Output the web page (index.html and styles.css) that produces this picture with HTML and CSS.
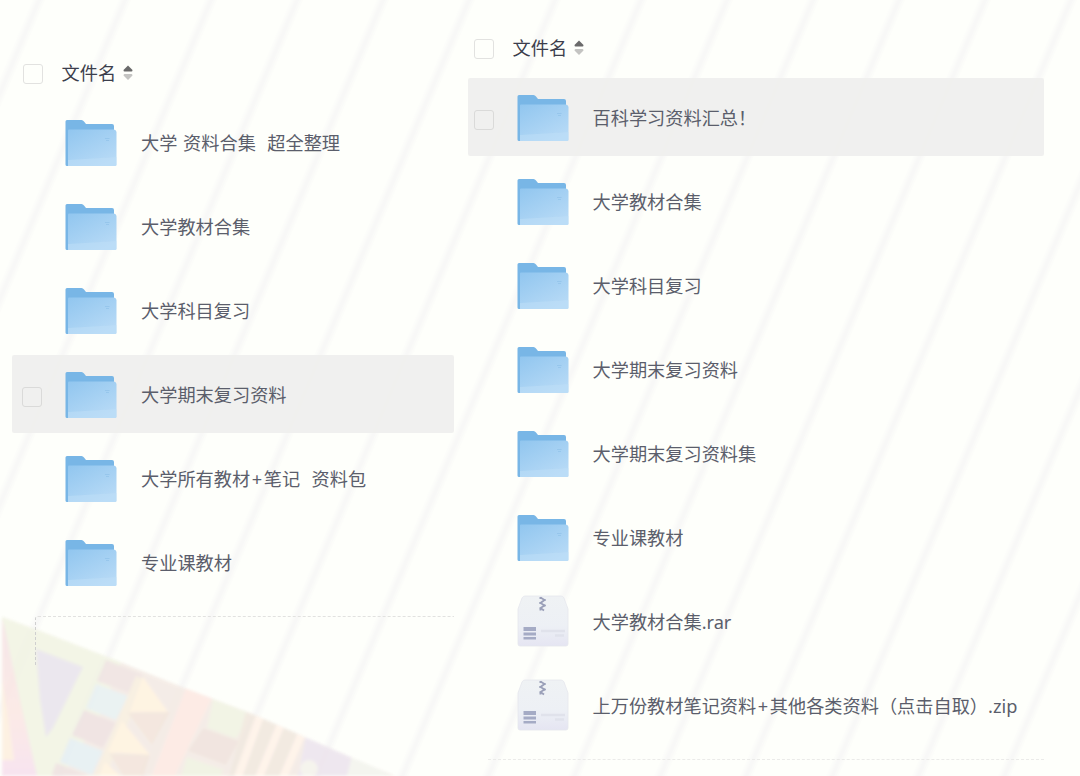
FILE: index.html
```
<!DOCTYPE html>
<html lang="zh-CN">
<head>
  <meta charset="UTF-8" />
  <meta name="viewport" content="width=device-width, initial-scale=1.0"/>
  <title>文件列表</title>
  <link rel="stylesheet" href="styles.css">
</head>
<body>

<!-- page backdrop: slanted stripes + patchwork corner -->
<svg class="backdrop" width="1080" height="776" viewBox="0 0 1080 776" aria-hidden="true">
  <defs>
    <linearGradient id="stripeFade">
      <stop offset="0" stop-color="#f8f8f7" stop-opacity="0"/>
      <stop offset=".45" stop-color="#f8f8f7"/>
      <stop offset=".55" stop-color="#f8f8f7"/>
      <stop offset="1" stop-color="#f8f8f7" stop-opacity="0"/>
    </linearGradient>
    <pattern id="stripes" width="86" height="800" patternUnits="userSpaceOnUse" patternTransform="skewX(-22.7)">
      <rect x="32" width="14" height="800" fill="url(#stripeFade)"/>
    </pattern>
    <linearGradient id="pinkEdge" x1="0" y1="0" x2="0" y2="1">
      <stop offset="0" stop-color="#f5e3e6"/>
      <stop offset=".6" stop-color="#fbe8e4"/>
      <stop offset="1" stop-color="#f7e1ef"/>
    </linearGradient>
    <clipPath id="corner">
      <path d="M2 617L40 631L115 660L187 689L250 713L300 735L350 757L395 776H2z"/>
    </clipPath>
    <filter id="soften"><feGaussianBlur stdDeviation="1.5"/></filter>
  </defs>
  <rect width="1080" height="776" fill="url(#stripes)"/>
  <g filter="url(#soften)" opacity=".9">
    <g clip-path="url(#corner)">
      <path fill="#f4ebe5" d="M0 610H400V780H0z"/>
      <path fill="#f2f4e4" d="M0 610L122 660L98 720L60 780H0z"/>
      <path fill="url(#pinkEdge)" d="M0 612L4 625L20 700L38 780H0z"/>
      <path fill="#fdf0e0" d="M0 670L8 715L14 760H0z"/>
      <path fill="#eae5ed" d="M36 649L83 667L53 728L46 737L40 700z"/>
      <path fill="#f0e4e2" d="M106 660L143 675L129 693L97 681z"/>
      <path fill="#e8f1f2" d="M96 684L128 696L116 720L86 708z"/>
      <path fill="#efe2e1" d="M84 710L116 723L103 748L72 735z"/>
      <path fill="#e6f0f3" d="M70 738L103 751L92 775L60 762z"/>
      <path fill="#efe3e1" d="M56 763L94 778L50 780z"/>
      <path fill="#f8efe0" d="M136 676L146 680L104 780H92z"/>
      <path fill="#fff3e0" d="M143 677L168 712H130z"/>
      <path fill="#fff3e0" d="M122 721L150 755L108 752z"/>
      <path fill="#fff3e0" d="M105 762L125 780H98z"/>
      <path fill="#f3e5dc" d="M128 713L170 712L152 745z"/>
      <path fill="#f3e5dc" d="M110 754L150 755L142 780H126z"/>
      <path fill="#fde9e3" d="M186 688L212 698L173 780H150z"/>
      <path fill="#f1f3e3" d="M213 699L252 714L236 739L207 728z"/>
      <path fill="#f0e3de" d="M203 728L239 741L226 765L188 751z"/>
      <path fill="#f0f2e2" d="M187 757L224 770L217 780H180z"/>
      <path fill="#f1e8df" d="M246 712L304 733L286 780H228z"/>
      <path fill="none" stroke="#fff3e9" stroke-width="8" d="M260 716L237 780M281 724L258 780M302 733L282 780"/>
      <path fill="#ede5ee" d="M306 735L352 756L346 780H297z"/>
      <path fill="#f3f4ee" d="M352 756L400 780H346z"/>
      <circle cx="309" cy="769" r="9" fill="#f5f3ec"/>
    </g>
  </g>
</svg>

<!-- icon symbols -->
<svg class="symbols" width="0" height="0" aria-hidden="true">
  <defs>
    <linearGradient id="folderFront" x1="0" y1="0" x2=".7" y2="1">
      <stop offset="0" stop-color="#91c6ef"/>
      <stop offset="1" stop-color="#b7daf6"/>
    </linearGradient>
    <linearGradient id="boxFill" x1="0" y1="0" x2="0" y2="1">
      <stop offset="0" stop-color="#eff2f4"/>
      <stop offset=".6" stop-color="#edf0f5"/>
      <stop offset="1" stop-color="#e5e5f2"/>
    </linearGradient>
    <symbol id="folder" viewBox="0 0 52 48">
      <path fill="#78b6e6" d="M2 1H16.500Q18 1 19 2.500L21 5H47Q49 5 49 7V14H3V47H2Q.500 47 .500 45.500V2.500Q.500 1 2 1z"/>
      <path fill="url(#folderFront)" d="M4 10.500H49Q51.500 11 51.500 13V45.500Q51.500 47 50 47H3V11.500Q3 10.500 4 10.500z"/>
      <path fill="#bfdff8" opacity=".5" d="M3 41L51.500 38V45.500Q51.500 47 50 47H3z"/>
      <path stroke="#7fb6e2" stroke-width=".8" opacity=".5" d="M40 19.500H44.500M41 21.500H44"/>
    </symbol>
    <symbol id="archive" viewBox="0 0 52 52">
      <path fill="url(#boxFill)" stroke="#e6e7ee" stroke-width=".8" d="M8 1H44Q46 1 47 3L51 14V49Q51 51 49 51H3Q1 51 1 49V14L5 3Q6 1 8 1z"/>
      <path fill="none" stroke="#9a9fb8" stroke-width="1.800" d="M23.500 2.500L27.500 5L23.500 8L27.500 10.500L23.500 13L27 15.500"/>
      <path fill="#9a9fb8" d="M22.500 2H24.500V4H22.500zM26.500 4H28.500V6H26.500zM22.500 7H24.500V9H22.500zM26.500 9.500H28.500V11.500H26.500zM22.500 13.500H24.500V15.500H22.500z"/>
      <path fill="#a5abc5" d="M6.500 32H19V36H6.500zM6.500 37.500H19V40.500H6.500zM6.500 42H19V44.500H6.500z"/>
      <path stroke="#e0e2eb" stroke-width="2.500" d="M24 36H48M38 40.500H47"/>
    </symbol>
    <symbol id="sort" viewBox="0 0 10 16">
      <path fill="#6a6a6a" d="M5 .500L9.500 5Q9.500 6.500 8.500 6.500H1.500Q.500 6.500 .500 5z"/>
      <path fill="#c4c4c2" d="M5 15L9.500 10.500Q9.500 9 8.500 9H1.500Q.500 9 .500 10.500z"/>
    </symbol>
  </defs>
</svg>

<main class="lists">
  <section class="panel panel-left">
    <div class="list-head">
      <span class="check"></span>
      <span>文件名</span>
      <svg class="sort"><use href="#sort"/></svg>
    </div>
    <div class="rows">
      <div class="row"><span class="check"></span><svg class="icon"><use href="#folder"/></svg><span class="name">大学 资料合集&nbsp; 超全整理</span></div>
      <div class="row"><span class="check"></span><svg class="icon"><use href="#folder"/></svg><span class="name">大学教材合集</span></div>
      <div class="row"><span class="check"></span><svg class="icon"><use href="#folder"/></svg><span class="name">大学科目复习</span></div>
      <div class="row active"><span class="check"></span><svg class="icon"><use href="#folder"/></svg><span class="name">大学期末复习资料</span></div>
      <div class="row"><span class="check"></span><svg class="icon"><use href="#folder"/></svg><span class="name">大学所有教材<span class="plus">+</span>笔记&nbsp; 资料包</span></div>
      <div class="row"><span class="check"></span><svg class="icon"><use href="#folder"/></svg><span class="name">专业课教材</span></div>
    </div>
    <div class="drop-area"></div>
  </section>

  <section class="panel panel-right">
    <div class="list-head">
      <span class="check"></span>
      <span>文件名</span>
      <svg class="sort"><use href="#sort"/></svg>
    </div>
    <div class="rows">
      <div class="row active"><span class="check"></span><svg class="icon"><use href="#folder"/></svg><span class="name">百科学习资料汇总！</span></div>
      <div class="row"><span class="check"></span><svg class="icon"><use href="#folder"/></svg><span class="name">大学教材合集</span></div>
      <div class="row"><span class="check"></span><svg class="icon"><use href="#folder"/></svg><span class="name">大学科目复习</span></div>
      <div class="row"><span class="check"></span><svg class="icon"><use href="#folder"/></svg><span class="name">大学期末复习资料</span></div>
      <div class="row"><span class="check"></span><svg class="icon"><use href="#folder"/></svg><span class="name">大学期末复习资料集</span></div>
      <div class="row"><span class="check"></span><svg class="icon"><use href="#folder"/></svg><span class="name">专业课教材</span></div>
      <div class="row"><span class="check"></span><svg class="icon archive"><use href="#archive"/></svg><span class="name">大学教材合集.rar</span></div>
      <div class="row"><span class="check"></span><svg class="icon archive"><use href="#archive"/></svg><span class="name">上万份教材笔记资料<span class="plus">+</span>其他各类资料（点击自取）.zip</span></div>
    </div>
    <div class="end-line"></div>
  </section>
</main>

</body>
</html>
```
FILE: styles.css
```
* {
  box-sizing: border-box;
}

body {
  margin: 0;
  height: 776px;
  background: #fefffb;
  color: #5b5e6b;
  font-family: "Noto Sans", "Noto Sans CJK SC", sans-serif;
  font-size: 18.2px;
  overflow: hidden;
}

.backdrop {
  position: absolute;
  top: 0;
  left: 0;
  z-index: -1;
}

.symbols {
  position: absolute;
}

.lists {
  display: flex;
  gap: 14px;
  padding-left: 12px;
}

.panel-left {
  width: 442px;
  padding-top: 53px;
}

.panel-right {
  width: 576px;
  padding-top: 28px;
}

.list-head {
  display: flex;
  align-items: center;
  height: 40px;
  padding-left: 10.5px;
  color: #3c3e4c;
  line-height: 26px;
}

.check {
  flex: none;
  width: 20px;
  height: 20px;
  border: 1.5px solid #e2e2e0;
  border-radius: 3px;
  visibility: hidden;
}

.list-head .check {
  margin: 1px 19px 0 0;
  visibility: visible;
}

.sort {
  width: 10px;
  height: 16px;
  margin-left: 7px;
}

.rows {
  display: flex;
  flex-direction: column;
  gap: 6px;
  margin-top: 10px;
}

.row {
  display: flex;
  align-items: center;
  height: 78px;
  padding: 2px 0 0 10px;
  border-radius: 2px;
}

.panel-right .list-head,
.panel-right .row {
  padding-left: 5.5px;
}

.row.active {
  background: rgba(238, 238, 237, 0.88);
}

.row.active .check {
  visibility: visible;
  margin-top: 4px;
  border-color: #dadad9;
}

.icon {
  flex: none;
  width: 52px;
  height: 48px;
  margin: 0 24px 0 23px;
}

.icon.archive {
  height: 52px;
  margin-bottom: 2px;
}

.name {
  white-space: nowrap;
  line-height: 26px;
  word-spacing: 1px;
}

.plus {
  padding: 0 1.6px;
}

.drop-area {
  height: 49px;
  margin: 15px 0 0 23px;
  border-top: 1px dashed #e2e2e0;
  border-left: 1px dashed #cfcfcf;
  border-top-left-radius: 3px;
}

.end-line {
  margin: 15px 0 0 20px;
  border-top: 1px dashed #ebebe9;
}
```
